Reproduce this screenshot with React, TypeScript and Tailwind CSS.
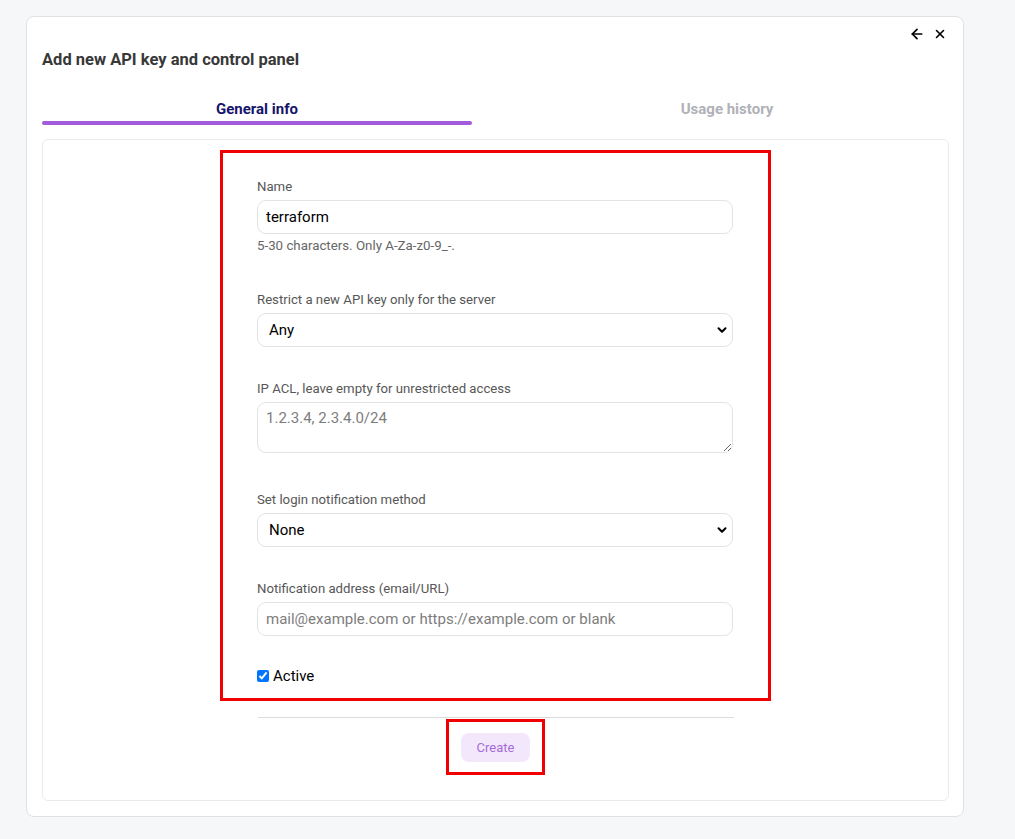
import { useState } from 'react';
import { ArrowLeft, X, ChevronDown } from 'lucide-react';

function FieldLabel({ children }: { children: React.ReactNode }) {
    return <div className="text-[13.2px] leading-4 text-[#575757] mb-[5px]">{children}</div>;
}

function SelectBox({ value, options, onChange }: { value: string; options: string[]; onChange: (v: string) => void }) {
    return (
        <div className="relative">
            <select
                value={value}
                onChange={(e) => onChange(e.target.value)}
                className="appearance-none w-full h-[34px] rounded-[9px] border border-[#e3e3e6] bg-white pl-[11px] pr-8 text-[15px] text-black focus:outline-none"
            >
                {options.map((o) => (
                    <option key={o}>{o}</option>
                ))}
            </select>
            <ChevronDown className="absolute right-[4px] top-1/2 -translate-y-1/2 pointer-events-none text-black" size={14} strokeWidth={3.5} />
        </div>
    );
}

export default function App() {
    const [tab, setTab] = useState<'general' | 'history'>('general');
    const [name, setName] = useState('terraform');
    const [server, setServer] = useState('Any');
    const [acl, setAcl] = useState('');
    const [notify, setNotify] = useState('None');
    const [address, setAddress] = useState('');
    const [active, setActive] = useState(true);

    return (
        <div className="min-h-screen bg-[#f6f7f9] pt-4 pl-[26px]" style={{ fontFamily: 'Roboto, "Noto Sans", sans-serif' }}>
            <div className="w-[938px] h-[801px] bg-white border border-[#e1e1e4] rounded-[8px] pl-[15px] pr-[14px] pb-[15px] flex flex-col">
                <div className="flex justify-end items-center gap-[8px] pt-[10px] pr-[2px] h-[24px]">
                    <ArrowLeft size={16} strokeWidth={2.6} className="text-black" />
                    <X size={14} strokeWidth={2.8} className="text-black" />
                </div>

                <h1 className="mt-[9px] text-[16.5px] leading-5 font-bold text-[#383838]">Add new API key and control panel</h1>

                <div className="flex mt-[29px]">
                    <button onClick={() => setTab('general')} className="w-[430px] shrink-0 flex flex-col items-center">
                        <span className={`text-[15px] leading-5 font-bold ${tab === 'general' ? 'text-[#15146a]' : 'text-[#b1b1b8]'}`}>General info</span>
                        <span className={`mt-[2px] h-[4px] w-full rounded-full ${tab === 'general' ? 'bg-[#a25bdc]' : 'bg-transparent'}`} />
                    </button>
                    <button onClick={() => setTab('history')} className="w-[510px] shrink-0 flex flex-col items-center">
                        <span className={`text-[15px] leading-5 font-bold ${tab === 'history' ? 'text-[#15146a]' : 'text-[#b1b1b8]'}`}>Usage history</span>
                        <span className={`mt-[2px] h-[4px] w-full rounded-full ${tab === 'history' ? 'bg-[#a25bdc]' : 'bg-transparent'}`} />
                    </button>
                </div>

                <div className="mt-[14px] flex-1 border border-[#ebebee] rounded-[6px] flex flex-col items-center pt-[10px]">
                    <div className="w-[551px] border-[3px] border-[#f00000] pt-[26px] pb-[12px] pl-[34px] pr-[35px]">
                        <FieldLabel>Name</FieldLabel>
                        <input
                            value={name}
                            onChange={(e) => setName(e.target.value)}
                            className="w-full h-[34px] rounded-[9px] border border-[#e3e3e6] px-[8px] text-[15px] text-black focus:outline-none"
                        />
                        <div className="mt-[4px] text-[13.3px] leading-4 text-[#666]">5-30 characters. Only A-Za-z0-9_-.</div>

                        <div className="mt-[38px]">
                            <FieldLabel>Restrict a new API key only for the server</FieldLabel>
                            <SelectBox value={server} options={['Any']} onChange={setServer} />
                        </div>

                        <div className="mt-[34px]">
                            <FieldLabel>IP ACL, leave empty for unrestricted access</FieldLabel>
                            <textarea
                                value={acl}
                                onChange={(e) => setAcl(e.target.value)}
                                placeholder="1.2.3.4, 2.3.4.0/24"
                                className="block w-full h-[51px] rounded-[9px] border border-[#e3e3e6] px-[8px] pt-[5px] text-[15px] leading-5 text-black placeholder:text-[#7d7d7d] focus:outline-none"
                            />
                        </div>

                        <div className="mt-[39px]">
                            <FieldLabel>Set login notification method</FieldLabel>
                            <SelectBox value={notify} options={['None', 'Email', 'Webhook']} onChange={setNotify} />
                        </div>

                        <div className="mt-[34px]">
                            <FieldLabel>Notification address (email/URL)</FieldLabel>
                            <input
                                value={address}
                                onChange={(e) => setAddress(e.target.value)}
                                placeholder="mail@example.com or https://example.com or blank"
                                className="w-full h-[34px] rounded-[9px] border border-[#e3e3e6] px-[8px] text-[15px] text-black placeholder:text-[#7d7d7d] focus:outline-none"
                            />
                        </div>

                        <label className="mt-[30px] flex items-center gap-[4px] h-5 text-[15px] text-black">
                            <input type="checkbox" checked={active} onChange={(e) => setActive(e.target.checked)} className="w-[12px] h-[12px] m-0" />
                            Active
                        </label>
                    </div>

                    <div className="mt-[16px] w-[476px] border-t border-[#dcdcdf]" />

                    <div className="mt-[1px] border-[3px] border-[#f00000] px-[12px] pt-[11px] pb-[10px]">
                        <button className="w-[69px] h-[29px] rounded-[8px] bg-[#f3e8fb] text-[13px] text-[#a66bd8]">Create</button>
                    </div>
                </div>
            </div>
        </div>
    );
}
